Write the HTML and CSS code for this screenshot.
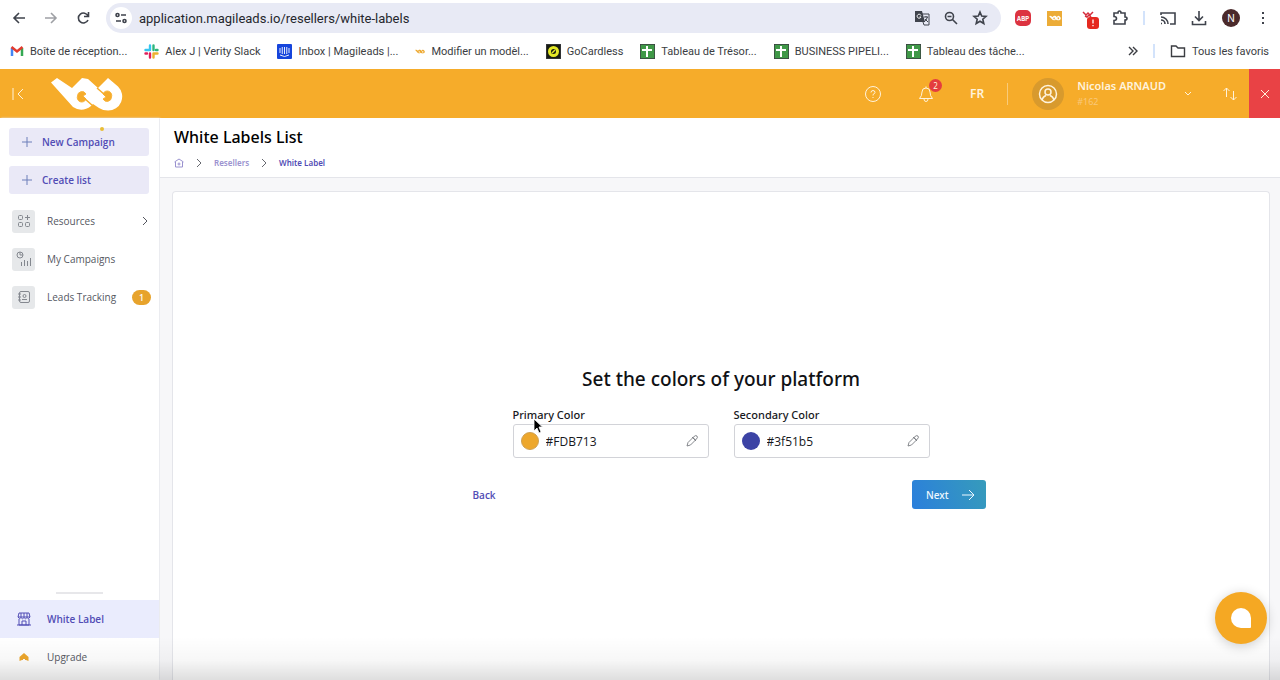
FILE: index.html
```html
<!DOCTYPE html>
<html lang="en">
<head>
<meta charset="utf-8">
<meta name="viewport" content="width=device-width, initial-scale=1">
<title>White Labels List</title>
<link rel="stylesheet" href="styles.css">
</head>
<body>
<svg class="defs" aria-hidden="true">
  <mask id="logo-mask" maskUnits="userSpaceOnUse" x="50" y="76" width="74" height="34">
    <rect x="50" y="76" width="74" height="34" fill="#fff"/>
    <path d="M77.500 95A4.500 4.500 0 0 1 86 93L83 95L86 98A4.500 4.500 0 0 1 77.500 95Z" fill="#000"/>
    <path d="M111.500 96A4.500 4.500 0 0 1 103 98L106 96L103 93A4.500 4.500 0 0 1 111.500 96Z" fill="#000"/>
    <path d="M84 97L93 105M105 94L97 87" stroke="#000" stroke-width="1.500"/>
  </mask>
  <symbol id="logo" viewBox="50 76 74 34">
    <path mask="url(#logo-mask)" fill="currentColor" d="M51 81.500L57 77L72 87L82 77L88 78L98 87L108 77L118 85.500A14 14 0 0 1 108 109.500Q103 109.500 99 107L93 103L91 105Q82 112 73 106Z"/>
  </symbol>
  <symbol id="sheet" viewBox="0 0 15 15"><rect width="15" height="15" rx="1" fill="#3f9847"/><path d="M2 6H12M7 2V13" stroke="#fff" stroke-width="2"/></symbol>
  <symbol id="plus" viewBox="0 0 12 12"><path d="M6 1V11M1 6H11" stroke="currentColor" fill="none"/></symbol>
  <symbol id="chev" viewBox="0 0 8 10"><path d="M2 1L6 5L2 9" stroke="currentColor" fill="none"/></symbol>
  <symbol id="pen" viewBox="0 0 14 14"><path d="M2 12L3 8.500L8 3.500L10.500 6L5.500 11ZM7 3L11 7M8 3.500Q10.500 0.500 12 2T10.500 6" stroke="currentColor" stroke-width=".9" fill="none"/></symbol>
</svg>

<div class="toolbar">
  <button class="tool" aria-label="Back in history"><svg width="14" height="14" viewBox="0 0 14 14"><path d="M13 7H2M7 2L2 7L7 12"/></svg></button>
  <button class="tool faded" aria-label="Forward"><svg width="14" height="14" viewBox="0 0 14 14"><path d="M1 7H12M7 2L12 7L7 12"/></svg></button>
  <button class="tool" aria-label="Reload"><svg width="14" height="14" viewBox="0 0 14 14"><path d="M12 5A5 5 0 1 0 12 9M12.500 1V5.500H8"/></svg></button>
  <div class="omnibox">
    <button class="site" aria-label="Site information"><svg width="12" height="12" viewBox="0 0 12 12"><circle cx="2.500" cy="3" r="1.500"/><path d="M6 3H11M1 9H6"/><circle cx="9.500" cy="9" r="1.500"/></svg></button>
    <input class="url" aria-label="Address" value="application.magileads.io/resellers/white-labels">
    <svg width="16" height="16" viewBox="0 0 16 16"><path d="M1 1H8L11 12H1Z" fill="#3f434c" stroke="none"/><path d="M8 4H15V15H10L9 12M10 7H14M12 6V7M13.500 7Q12 11 10 12M11 9L14 12" stroke-width="1"/><path d="M7 5.500A2 2 0 1 0 7 7H5.500" stroke="#fff" stroke-width="1"/></svg>
    <svg width="14" height="14" viewBox="0 0 14 14"><circle cx="5.500" cy="5.500" r="4"/><path d="M8.500 8.500L13 13M3.500 5.500H7.500"/></svg>
    <svg width="16" height="16" viewBox="0 0 16 16"><path d="M8 2L9.700 6L14 6.400L10.800 9.200L11.800 13.500L8 11.200L4.200 13.500L5.200 9.200L2 6.400L6.300 6Z"/></svg>
  </div>
  <div class="extensions">
    <span class="abp">ABP</span>
    <span class="mini"><svg width="12" height="6"><use href="#logo"/></svg></span>
    <span class="alert"><svg width="18" height="18" viewBox="0 0 18 18"><path d="M1 1L4 4L6 2L8 4L11 1M3 5L5 6L7 4L9 6" stroke="#d52e3d" stroke-width="1.500"/><rect x="5" y="6" width="12" height="12" rx="3" fill="#e5291f" stroke="none"/><path d="M11 8.500V12.500M11 14V15.300" stroke="#fff" stroke-width="1.300"/></svg></span>
    <svg width="16" height="16" viewBox="0 0 16 16"><path d="M2 3H6Q6 1 7.500 1T9 3H13V7Q15 7 15 8.500T13 10V14H2V10.500Q4.500 10.500 4.500 8.500T2 6.500Z"/></svg>
    <i class="bar"></i>
    <svg width="16" height="14" viewBox="0 0 16 14"><path d="M1 4V2H15V13H10M1 6A7 7 0 0 1 8 13M1 9A4 4 0 0 1 5 13M1 12.500H2"/></svg>
    <svg width="16" height="16" viewBox="0 0 16 16"><path d="M8 1V10M4 6.500L8 10.500L12 6.500M1.500 11V14.500H14.500V11"/></svg>
    <span class="profile">N</span>
    <svg width="4" height="14" viewBox="0 0 4 14"><path fill="#3f434c" stroke="none" d="M1 1H3V3H1ZM1 6H3V8H1ZM1 11H3V13H1Z"/></svg>
  </div>
</div>

<nav class="bookmarks" aria-label="Bookmarks">
  <a href="#"><svg width="14" height="14" viewBox="0 0 14 14"><path d="M2 12V4" stroke="#4285f4" stroke-width="2.500"/><path d="M12 12V4" stroke="#34a853" stroke-width="2.500"/><path d="M1.500 3L7 7.500L12.500 3" stroke="#e33b2e" stroke-width="2.500"/></svg>Boîte de réception...</a>
  <a href="#"><svg width="15" height="15" viewBox="0 0 15 15"><g stroke-linecap="round" class="slack"><path d="M6 1.500V6M1.500 6H6" stroke="#36c5f0"/><path d="M9.500 1.500V6M13.500 6H12" stroke="#2eb67d"/><path d="M9.500 9.500H13.500M9.500 9.500V13.500" stroke="#ecb22e"/><path d="M6 9.500V13.500M1.500 9.500H3" stroke="#e01e5a"/></g></svg>Alex J | Verity Slack</a>
  <a href="#"><svg width="15" height="15" viewBox="0 0 15 15"><rect width="15" height="15" rx="1" fill="#1645dc" stroke="none"/><path d="M3 4V9M5.250 3V10M7.500 3V10M9.750 3V10M12 4V9M3 11Q7.500 14 12 11" stroke="#fff" stroke-width=".9"/></svg>Inbox | Magileads |...</a>
  <a href="#"><svg class="gold" width="10" height="5"><use href="#logo"/></svg>Modifier un modèl...</a>
  <a href="#"><svg width="15" height="15" viewBox="0 0 15 15"><rect width="15" height="15" fill="#181b12"/><circle cx="7.500" cy="7.500" r="4" stroke="#e4e927" stroke-width="3"/><path d="M6 9L9 6" stroke="#e4e927"/></svg>GoCardless</a>
  <a href="#"><svg width="15" height="15"><use href="#sheet"/></svg>Tableau de Trésor...</a>
  <a href="#"><svg width="15" height="15"><use href="#sheet"/></svg>BUSINESS PIPELI...</a>
  <a href="#"><svg width="15" height="15"><use href="#sheet"/></svg>Tableau des tâche...</a>
  <div class="all">
    <button class="tool" aria-label="More bookmarks"><svg width="10" height="10" viewBox="0 0 10 10"><path d="M1 1L5 5L1 9M5 1L9 5L5 9"/></svg></button>
    <i class="bar"></i>
    <a href="#"><svg width="16" height="14" viewBox="0 0 16 14"><path d="M1.500 2H6L8 4H14.500V12.500H1.500Z"/></svg>Tous les favoris</a>
  </div>
</nav>

<header class="topbar">
  <button class="collapse" aria-label="Collapse menu"><svg width="13" height="14" viewBox="0 0 13 14"><path d="M1 1V13M11 2L6 7L11 12"/></svg></button>
  <a href="#" class="brand" aria-label="Magileads"><svg width="74" height="34"><use href="#logo"/></svg></a>
  <div class="account">
    <button aria-label="Help"><svg width="18" height="18" viewBox="0 0 18 18"><circle cx="9" cy="9" r="7.500"/><path d="M7 7.500Q7 5.500 9 5.500T11 7.500Q11 8.500 9 9.500V10.500M9 12V13"/></svg></button>
    <button class="bell" aria-label="Notifications"><svg width="16" height="18" viewBox="0 0 16 18"><path d="M1.500 13.500Q4 11 4 7Q4 3 8 3T12 7Q12 11 14.500 13.500ZM6 14Q6 16.500 8 16.500T10 14M8 3V1.500"/></svg><span class="count">2</span></button>
    <button class="lang">FR</button>
    <i class="rule"></i>
    <button class="avatar" aria-label="Profile"><svg width="20" height="20" viewBox="0 0 20 20" stroke-width="1.500"><circle cx="10" cy="10" r="8.500"/><circle cx="10" cy="8" r="3"/><path d="M4 16Q5 12.500 8 11.500M16 16Q15 12.500 12 11.500"/></svg></button>
    <div class="who"><strong>Nicolas ARNAUD</strong><span>#162</span></div>
    <button class="drop" aria-label="Account menu"><svg width="8" height="6" viewBox="0 0 8 6"><path d="M1 1L4 4L7 1"/></svg></button>
    <button aria-label="Switch account"><svg width="16" height="16" viewBox="0 0 16 16"><path d="M4.500 11V2M1.500 5L4.500 2L7.500 5M11.500 5V14M8.500 11L11.500 14L14.500 11"/></svg></button>
  </div>
  <button class="close" aria-label="Close"><svg width="10" height="10" viewBox="0 0 10 10"><path d="M1 1L9 9M9 1L1 9"/></svg></button>
</header>

<div class="layout">
  <aside class="sidebar">
    <div class="actions">
      <button class="action"><svg width="12" height="12"><use href="#plus"/></svg>New Campaign<i class="spark"></i></button>
      <button class="action"><svg width="12" height="12"><use href="#plus"/></svg>Create list</button>
    </div>
    <nav class="menu" aria-label="Main">
      <a href="#"><span class="tile"><svg width="14" height="14" viewBox="0 0 14 14"><rect x="1.500" y="1.500" width="4" height="4" rx="1"/><rect x="1.500" y="8.500" width="4" height="4" rx="1"/><rect x="8.500" y="8.500" width="4" height="4" rx="1"/><path d="M10.500 1V6M8 3.500H13"/></svg></span>Resources<svg class="end" width="8" height="10"><use href="#chev"/></svg></a>
      <a href="#"><span class="tile"><svg width="16" height="16" viewBox="0 0 16 16"><circle cx="4" cy="4" r="3"/><path d="M4 1V4H7M5.500 15V11M8.500 15V9M11.500 15V10M14.500 15V7"/></svg></span>My Campaigns</a>
      <a href="#"><span class="tile"><svg width="14" height="14" viewBox="0 0 14 14"><rect x="2.500" y="1.500" width="10" height="11" rx="1.500"/><circle cx="7.500" cy="6" r="1.500"/><path d="M5 9.500H10M1 4H4M1 7H4M1 10H4"/></svg></span>Leads Tracking<span class="badge end">1</span></a>
    </nav>
    <nav class="menu foot" aria-label="Secondary">
      <a href="#" class="current"><span class="tile plain"><svg width="14" height="14" viewBox="0 0 14 14"><path d="M2 1H12L13 5H1ZM4 1V5M7 1V5M10 1V5M1 5Q2.500 8 4 5.500Q5.500 8 7 5.500Q8.500 8 10 5.500Q11.500 8 13 5M2 7V13H12V7M5 13V9H9V13M0 13H14"/></svg></span>White Label</a>
      <a href="#"><span class="tile plain"><svg width="10" height="10" viewBox="0 0 10 10"><path d="M5 1L9.500 5V9L7 8H6V7H4V8H3L.5 9V5Z" fill="#eda72c" stroke="none"/></svg></span>Upgrade</a>
    </nav>
  </aside>

  <main class="main">
    <div class="heading">
      <h1>White Labels List</h1>
      <nav class="crumbs" aria-label="Breadcrumb">
        <a href="#" aria-label="Home"><svg width="10" height="10" viewBox="0 0 10 10"><path d="M.5 4L5 1L9.500 4M1.500 4V9H8.500V4"/><circle cx="5" cy="6" r="1"/></svg></a>
        <svg width="8" height="10"><use href="#chev"/></svg>
        <a href="#">Resellers</a>
        <svg width="8" height="10"><use href="#chev"/></svg>
        <a href="#" class="here">White Label</a>
      </nav>
    </div>
    <div class="content">
      <form class="card">
        <div class="step">
          <h2>Set the colors of your platform</h2>
          <div class="fields">
            <div class="field">
              <label for="primary">Primary Color</label>
              <div class="box"><i class="swatch gold-fill"></i><input id="primary" value="#FDB713"><svg width="14" height="14"><use href="#pen"/></svg></div>
              <svg class="pointer" width="10" height="16" viewBox="0 0 10 16"><path d="M1 1V13L4 10L6 15L8 14L6 9H9.500Z" fill="#000" stroke="#fff" stroke-width=".8"/></svg>
            </div>
            <div class="field">
              <label for="secondary">Secondary Color</label>
              <div class="box"><i class="swatch blue-fill"></i><input id="secondary" value="#3f51b5"><svg width="14" height="14"><use href="#pen"/></svg></div>
            </div>
          </div>
          <div class="buttons">
            <button type="button" class="back">Back</button>
            <button type="button" class="next">Next<svg width="14" height="14" viewBox="0 0 14 14"><path d="M1 7H13M8 2L13 7L8 12"/></svg></button>
          </div>
        </div>
      </form>
    </div>
  </main>
  <div class="shade"></div>
  <button class="chat" aria-label="Open chat"><svg width="20" height="20" viewBox="0 0 20 20"><path d="M10 0A10 10 0 0 1 20 10V19Q20 20 19 20H10A10 10 0 0 1 10 0Z" fill="#fff" stroke="none"/></svg></button>
</div>
</body>
</html>
```

FILE: styles.css
```css
* { box-sizing: border-box; }

body {
  margin: 0;
  height: 100vh;
  display: flex;
  flex-direction: column;
  overflow: hidden;
  background: #fff;
  color: #17181c;
  font-family: "Noto Sans", sans-serif;
  font-size: 11px;
}

svg { fill: none; stroke: currentColor; flex: none; display: block; }
a { color: inherit; text-decoration: none; }
button { border: 0; padding: 0; background: none; color: inherit; font: inherit; display: flex; align-items: center; cursor: pointer; }
input { border: 0; padding: 0; background: none; color: inherit; font: inherit; outline: 0; min-width: 0; flex: 1; }
h1, h2 { margin: 0; font-weight: 500; }
.defs { position: absolute; width: 0; height: 0; }
#logo, #logo-mask rect { stroke: none; }

/* Browser toolbar */
.toolbar {
  display: flex;
  align-items: center;
  height: 36px;
  padding: 0 15px 0 12px;
  gap: 18px;
  color: #3f434c;
  font-family: Inter, sans-serif;
}
.toolbar svg { stroke-width: 1.6; }
.faded { opacity: .5; }
.omnibox {
  flex: 1;
  display: flex;
  align-items: center;
  gap: 14px;
  height: 30px;
  margin-right: 16px;
  padding: 0 13px 0 4px;
  border-radius: 15px;
  background: #e8eaf5;
}
.site { width: 22px; height: 22px; justify-content: center; border-radius: 50%; background: #fff; }
.url { margin-left: -7px; color: #25272d; font-family: Roboto, sans-serif; font-size: 13px; }
.toolbar > .tool:nth-child(3) { margin-right: -2px; }
.extensions { display: flex; align-items: center; gap: 15px; margin-left: -18px; }
.abp { display: grid; place-items: center; width: 16px; height: 16px; margin-right: 1px; border-radius: 5px; background: #dc3340; color: #fff; font-size: 6px; font-weight: 700; }
.mini { display: grid; place-items: center; width: 15px; height: 15px; background: #ecac37; color: #fff; }
.alert { height: 14px; margin: 0 -4px 0 4px; }
.bar { width: 2px; height: 14px; background: #d3e3fb; }
.extensions .bar { margin-left: -1px; }
.profile { display: grid; place-items: center; width: 18px; height: 18px; margin-right: 6px; border-radius: 50%; background: #4b2a2b; color: #fff; font-size: 10px; }
.extensions > svg:nth-child(4) { margin-right: 1px; }
.extensions .alert { margin: 0 -3px 0 5px; }
.omnibox { margin-right: 14px; }

/* Bookmarks */
.bookmarks {
  display: flex;
  align-items: center;
  height: 33px;
  padding: 0 11px 3px 10px;
  gap: 17px;
  color: #3b3d42;
  font-family: Roboto, sans-serif;
  font-size: 11px;
  white-space: nowrap;
}
.bookmarks a { display: flex; align-items: center; gap: 6px; }
.bookmarks svg { stroke-width: 1.4; }
.bookmarks .slack { stroke-width: 2.4; }
.bookmarks .gold { color: #eda72c; }
.bookmarks .all { display: flex; align-items: center; gap: 15px; margin-left: auto; }

/* Application bar */
.topbar { display: flex; align-items: center; height: 49px; background: #f6ac2a; color: #fff3dc; flex: none; }
.collapse { margin-left: 12px; }
.brand { margin-left: 25px; color: #fff; }
.account { display: flex; align-items: center; margin-left: auto; padding-right: 11px; }
.bell { position: relative; margin: 0 36px; }
.count { position: absolute; top: -6px; right: -8px; width: 13px; height: 13px; border-radius: 50%; background: #e43d3f; font-size: 8px; line-height: 13px; text-align: center; }
.lang { font-size: 12px; font-weight: 600; }
.rule { width: 1px; height: 22px; margin: 0 24px 0 23px; background: #f9cb7a; }
.avatar { width: 32px; height: 32px; justify-content: center; border-radius: 50%; background: #d89a2d; }
.who { display: flex; flex-direction: column; margin-left: 13px; line-height: 16px; }
.who strong { font-weight: 600; }
.who span { color: #f9c87b; font-size: 9px; }
.drop { margin: 0 30px 0 18px; }
.close { width: 31px; height: 49px; justify-content: center; background: #e94245; }

/* Sidebar */
.layout { position: relative; display: flex; flex: 1; min-height: 0; }
.sidebar { display: flex; flex-direction: column; width: 159px; padding-top: 10px; color: #55575f; font-family: "Open Sans", "Noto Sans", sans-serif; font-size: 10px; font-weight: 500; box-shadow: 1px 0 2px #e2e3ea; }
.actions { display: flex; flex-direction: column; gap: 10px; padding: 0 10px 0 9px; }
.action { position: relative; gap: 9px; height: 28px; padding-left: 12px; border-radius: 3px; background: #eae9f7; color: #514cb5; font-weight: 600; }
.action svg { color: #6d7fb9; }
.spark { position: absolute; top: -1px; right: 45px; width: 4px; height: 4px; border-radius: 50%; background: #e9bd35; }
.menu { display: flex; flex-direction: column; padding-top: 8px; }
.menu a { display: flex; align-items: center; height: 38px; padding: 0 8px 0 12px; }
.tile { display: grid; place-items: center; width: 23px; height: 23px; margin-right: 12px; border-radius: 3px; background: #e6e8ea; color: #84888f; }
.tile.plain { background: none; color: inherit; }
.end { margin-left: auto; }
svg.end { margin-right: 2px; }
.badge { width: 19px; height: 15px; border-radius: 8px; background: #e7a32c; color: #fff; font-family: "Noto Sans", sans-serif; font-size: 9px; line-height: 15px; text-align: center; }
.foot { margin-top: auto; padding: 0 0 4px; }
.foot::before { content: ""; width: 47px; height: 2px; margin: 0 auto 6px; background: #e7e7ea; }
.foot .current { background: #eaecfd; color: #514cb5; font-weight: 600; }

/* Page */
.main { display: flex; flex: 1; flex-direction: column; min-width: 0; margin-left: 1px; background: #f7f7f9; }
.heading { height: 60px; padding: 8px 14px 0; border-bottom: 1px solid #e4e5ea; background: #fff; }
h1 { font-size: 16px; line-height: 22px; color: #000; }
.crumbs { display: flex; align-items: center; gap: 11px; margin-top: 9px; color: #66686f; font-size: 8px; line-height: 12px; font-weight: 600; }
.crumbs a { color: #9a92cf; }
.crumbs .here { color: #514cb5; }
.content { display: flex; flex: 1; padding: 13px 10px 0 12px; }
.card { display: flex; flex: 1; align-items: center; justify-content: center; padding-top: 2px; border: 1px solid #e4e5ea; border-bottom: 0; border-radius: 4px 4px 0 0; background: #fff; }
.step { width: 513px; }
h2 { font-size: 19px; line-height: 28px; text-align: center; color: #101114; }
.fields { display: flex; justify-content: center; gap: 25px; margin-top: 12px; }
.field { position: relative; width: 196px; }
.field label { display: block; font-size: 11px; line-height: 19px; font-weight: 500; }
.box { display: flex; align-items: center; gap: 7px; height: 34px; padding: 0 9px 0 7px; border: 1px solid #d2d3d8; border-radius: 3px; font-family: "Open Sans", "Noto Sans", sans-serif; font-size: 12px; }
.box svg { color: #777a80; }
.swatch { width: 18px; height: 18px; border-radius: 50%; }
.gold-fill { background: #eda72c; border: 1px solid #cfa052; }
.blue-fill { background: #3c43a5; }
.pointer { position: absolute; left: 20px; top: 13px; }
.buttons { display: flex; align-items: center; justify-content: space-between; margin: 22px -8px 0 8px; }
.back { color: #514cb5; font-family: "Open Sans", "Noto Sans", sans-serif; font-size: 10px; font-weight: 600; }
.next { gap: 12px; height: 29px; padding: 0 11px 0 14px; border-radius: 3px; background: linear-gradient(70deg, #2b7fdc, #369bbb); color: #eef8ff; font-size: 10px; font-weight: 500; }

.shade { position: absolute; inset: auto 0 0; height: 44px; background: linear-gradient(transparent, rgba(0, 0, 0, .03) 55%, rgba(0, 0, 0, .13)); pointer-events: none; }
.chat { position: absolute; right: 13px; bottom: 36px; width: 52px; height: 52px; justify-content: center; border-radius: 50%; background: #f5a823; box-shadow: 0 2px 12px rgba(0, 0, 0, .2); }
```
